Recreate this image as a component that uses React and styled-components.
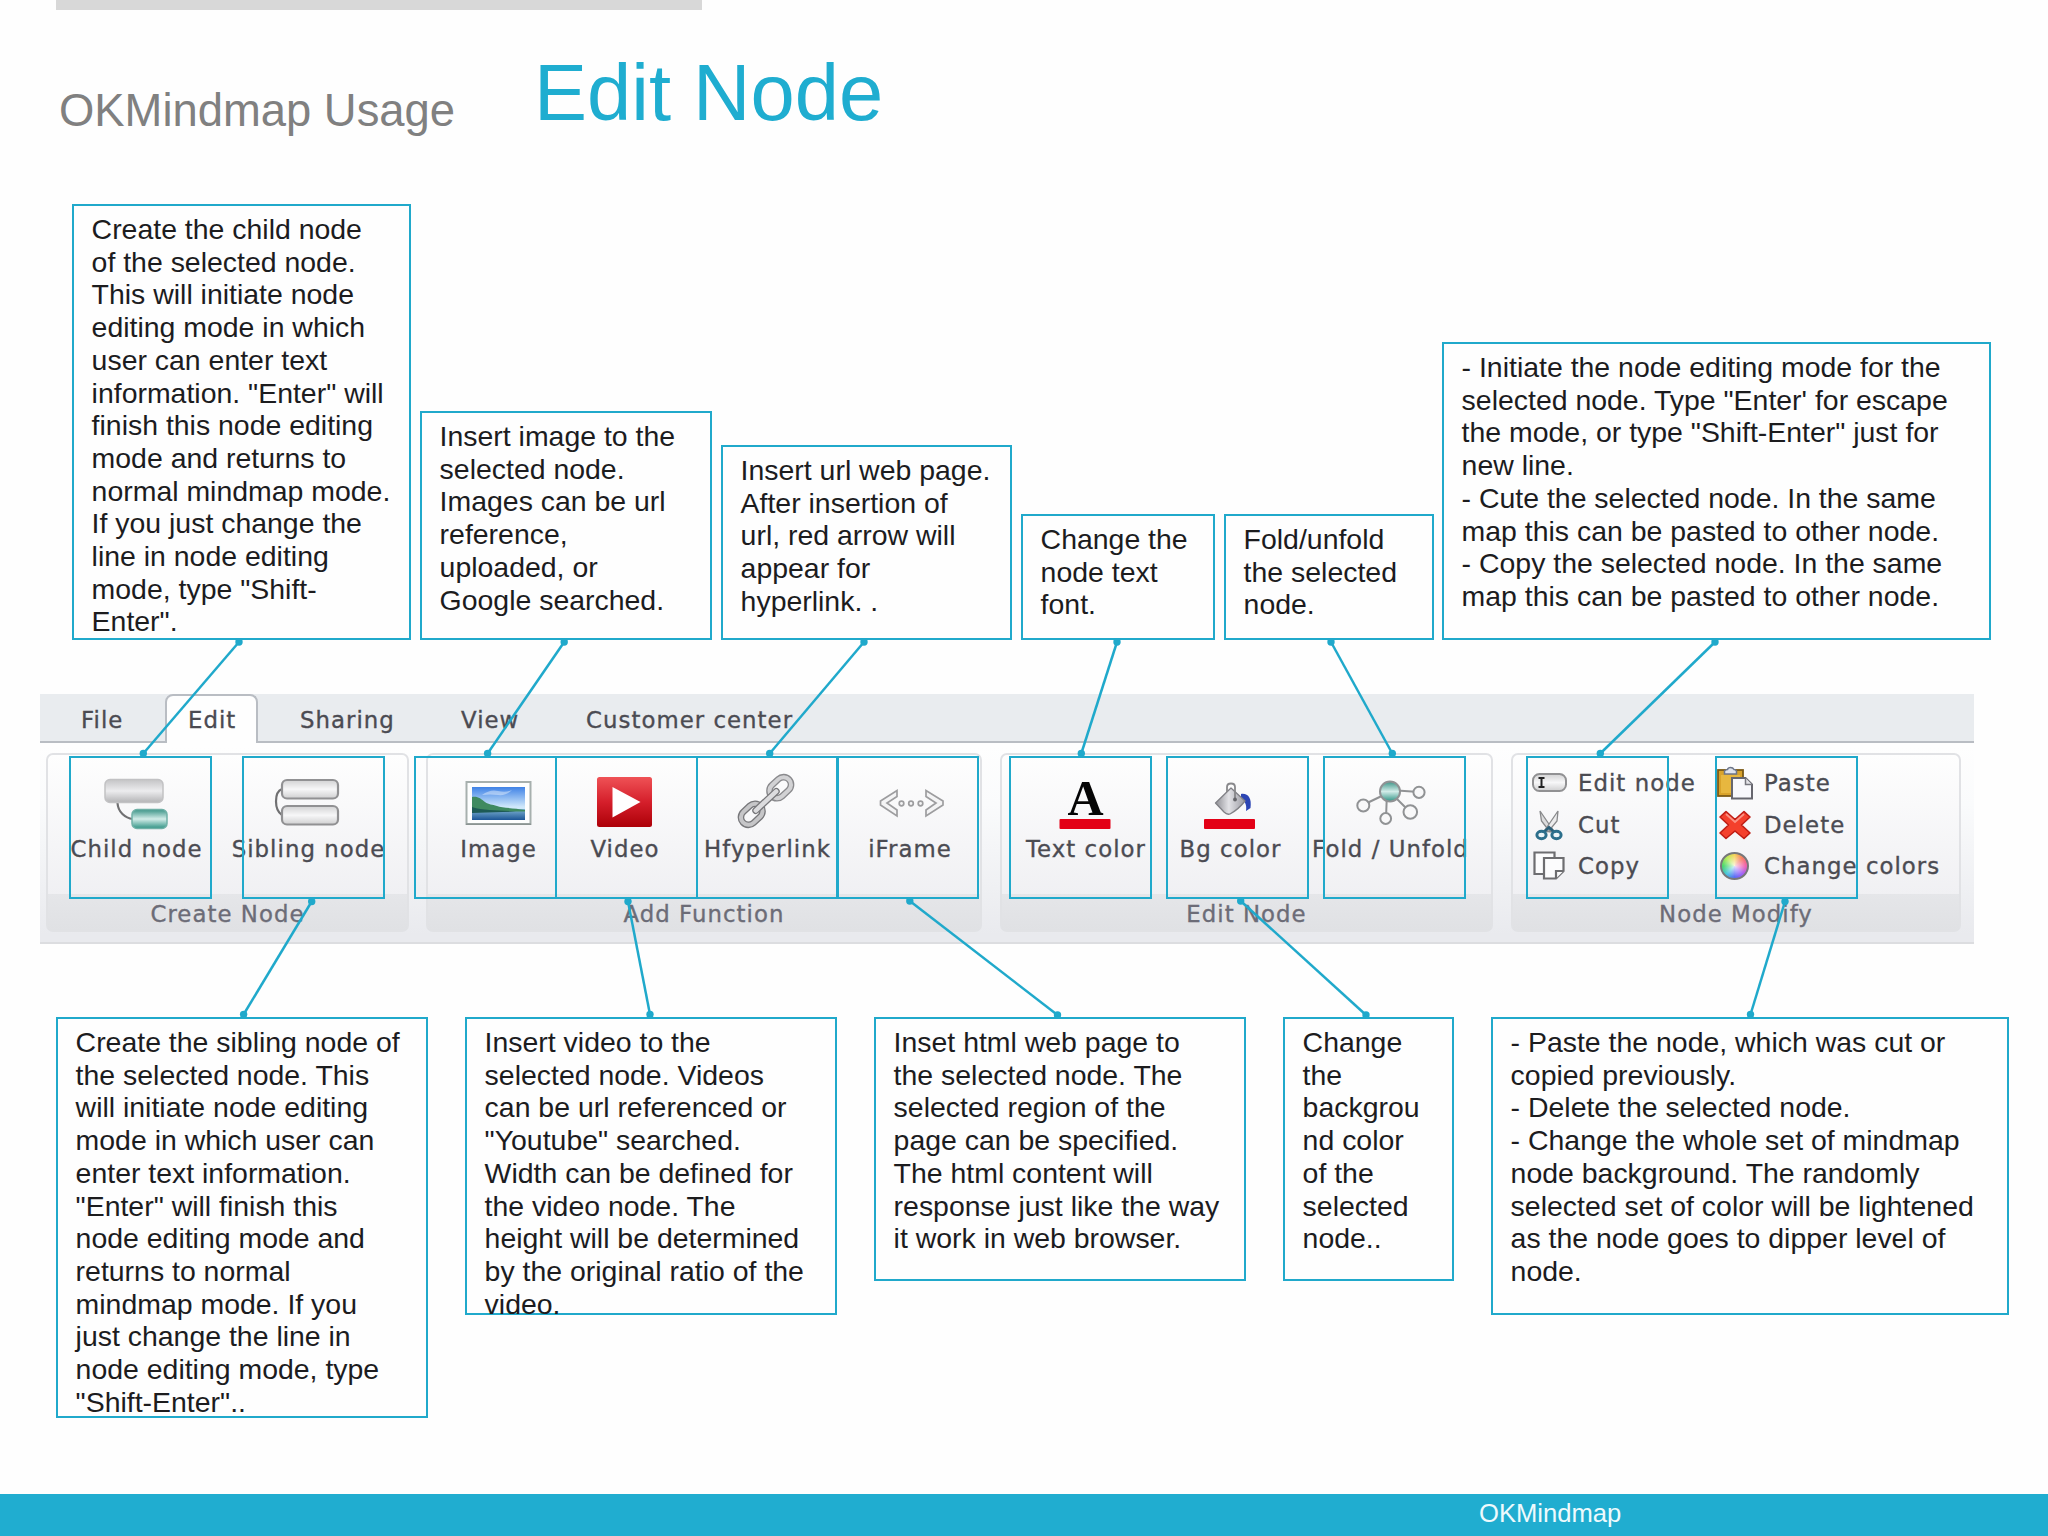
import React from 'react'
import styled, { createGlobalStyle } from 'styled-components'

const topNotes = [
    { width: 339, height: 436, gap: 9, text: 'Create the child node\nof the selected node.\nThis will initiate node\nediting mode in which\nuser can enter text\ninformation. "Enter" will\nfinish this node editing\nmode and returns to\nnormal mindmap mode.\nIf you just change the\nline in node editing\nmode, type "Shift-\nEnter".' },
    { width: 292, height: 229, gap: 9, text: 'Insert image to the\nselected node.\nImages can be url\nreference,\nuploaded, or\nGoogle searched.' },
    { width: 291, height: 195, gap: 9, text: 'Insert url web page.\nAfter insertion of\nurl, red arrow will\nappear for\nhyperlink. .' },
    { width: 194, height: 126, gap: 9, text: 'Change the\nnode text\nfont.' },
    { width: 210, height: 126, gap: 8, text: 'Fold/unfold\nthe selected\nnode.' },
    { width: 549, height: 298, gap: 0, text: '- Initiate the node editing mode for the\nselected node. Type "Enter\' for escape\nthe mode, or type "Shift-Enter" just for\nnew line.\n- Cute the selected node. In the same\nmap this can be pasted to other node.\n- Copy the selected node. In the same\nmap this can be pasted to other node.' },
]

const bottomNotes = [
    { width: 372, height: 401, gap: 37, text: 'Create the sibling node of\nthe selected node. This\nwill initiate node editing\nmode in which user can\nenter text information.\n"Enter" will finish this\nnode editing mode and\nreturns to normal\nmindmap mode. If you\njust change the line in\nnode editing mode, type\n"Shift-Enter"..' },
    { width: 372, height: 298, gap: 37, text: 'Insert video to the\nselected node. Videos\ncan be url referenced or\n"Youtube" searched.\nWidth can be defined for\nthe video node. The\nheight will be determined\nby the original ratio of the\nvideo.' },
    { width: 372, height: 264, gap: 37, text: 'Inset html web page to\nthe selected node. The\nselected region of the\npage can be specified.\nThe html content will\nresponse just like the way\nit work in web browser.' },
    { width: 171, height: 264, gap: 37, text: 'Change\nthe\nbackgrou\nnd color\nof the\nselected\nnode..' },
    { width: 518, height: 298, gap: 0, text: '- Paste the node, which was cut or\ncopied previously.\n- Delete the selected node.\n- Change the whole set of mindmap\nnode background. The randomly\nselected set of color will be lightened\nas the node goes to dipper level of\nnode.' },
]

// left edges of the frames drawn over the ribbon
const frames = [69, 242, 414, 555, 696, 836, 1009, 1166, 1323, 1526, 1715]

const connectors = [
    [239, 642, 143.3, 753.5],
    [564.2, 642, 487.6, 753.5],
    [864, 642, 769.7, 753.5],
    [1117, 642, 1081.3, 753.5],
    [1331, 642, 1392.3, 753.5],
    [1715, 642, 1600.3, 753.5],
    [311.7, 901.5, 243.6, 1014.5],
    [628, 901.5, 650, 1014.5],
    [909.8, 901, 1057.5, 1015],
    [1240.7, 901, 1366, 1015],
    [1785, 901.5, 1750.5, 1014.5],
]

const ChildIcon = () => (
    <ToolSvg viewBox="0 0 72 54">
        <defs>
            <linearGradient id="silver" x2="0" y2="1">
                <stop offset="0" stopColor="#c4c4c6" />
                <stop offset=".5" stopColor="#ececee" />
                <stop offset="1" stopColor="#b4b4b6" />
            </linearGradient>
            <linearGradient id="teal" x2="0" y2="1">
                <stop offset="0" stopColor="#3b9487" />
                <stop offset=".5" stopColor="#d2ece8" />
                <stop offset="1" stopColor="#2f9384" />
            </linearGradient>
        </defs>
        <path d="M17.5 27C18 36 25 42 33 43" fill="none" stroke="#707072" strokeWidth="2.2" />
        <rect x="5" y="3.5" width="58" height="23" rx="5" fill="url(#silver)" stroke="#c2c2c4" strokeWidth="1.5" />
        <rect x="32" y="33.5" width="35" height="19" rx="5" fill="url(#teal)" stroke="#6fb0a6" strokeWidth="1.5" />
    </ToolSvg>
)

const SiblingIcon = () => (
    <ToolSvg viewBox="0 0 72 54">
        <defs>
            <linearGradient id="pale" x2="0" y2="1">
                <stop offset="0" stopColor="#d2d2d3" />
                <stop offset=".5" stopColor="#f7f7f8" />
                <stop offset="1" stopColor="#cfcfd0" />
            </linearGradient>
        </defs>
        <path d="M10 13C2 16 2 34 10 39" fill="none" stroke="#707072" strokeWidth="2.2" />
        <rect x="10" y="4" width="56" height="18.5" rx="5" fill="url(#pale)" stroke="#919193" strokeWidth="2.2" />
        <rect x="10" y="30" width="56" height="18.5" rx="5" fill="url(#pale)" stroke="#919193" strokeWidth="2.2" />
    </ToolSvg>
)

const ImageIcon = () => (
    <ToolSvg viewBox="0 0 72 54">
        <defs>
            <linearGradient id="sky" x2="0" y2="1">
                <stop offset="0" stopColor="#3f82e6" />
                <stop offset=".6" stopColor="#cfe8fb" />
            </linearGradient>
            <linearGradient id="lake" x2="0" y2="1">
                <stop offset="0" stopColor="#7fb4d3" />
                <stop offset="1" stopColor="#1c5596" />
            </linearGradient>
        </defs>
        <rect x="4.5" y="6" width="64" height="42" fill="#fdfefe" stroke="#a7b0ae" strokeWidth="2" />
        <path d="M4 48.3H69" stroke="#8b9492" strokeWidth="1.5" />
        <rect x="10" y="11" width="53" height="33" fill="url(#sky)" />
        <path d="M20 19q8-6 16-4t14-1q-6 6-14 5t-16 0z" fill="#fff" opacity=".4" />
        <rect x="10" y="33" width="53" height="11" fill="url(#lake)" />
        <path d="M10 21c6-1 9 2 13 5s7 2 12 4 18 2 28 4v1.5H10z" fill="#3f8a60" />
        <path d="M10 31c12 4 28 3 44 4.5L10 37z" fill="#1d5a55" />
    </ToolSvg>
)

const VideoIcon = () => (
    <ToolSvg viewBox="0 0 72 54">
        <defs>
            <linearGradient id="red" x2="0" y2="1">
                <stop offset="0" stopColor="#ef5256" />
                <stop offset=".5" stopColor="#d51f2b" />
                <stop offset="1" stopColor="#ad0008" />
            </linearGradient>
        </defs>
        <rect x="8" y="1" width="55" height="50" rx="2.5" fill="url(#red)" />
        <path d="M23.5 11L51.5 26L23.5 41.5Z" fill="#fff" />
    </ToolSvg>
)

// two rings joined by a bar, drawn flat and turned by 48 degrees
const LinkIcon = () => (
    <ToolSvg viewBox="0 0 72 54">
        <g fill="none" transform="rotate(-43 35 25)">
            <rect x="3.5" y="17.5" width="24" height="15" rx="7.5" stroke="#77777a" strokeWidth="6.6" />
            <rect x="3.5" y="17.5" width="24" height="15" rx="7.5" stroke="#c6c6c8" strokeWidth="4" />
            <rect x="42.500" y="17.5" width="24" height="15" rx="7.5" stroke="#8a8a8d" strokeWidth="6.6" />
            <rect x="42.500" y="17.5" width="24" height="15" rx="7.5" stroke="#d2d2d4" strokeWidth="4" />
            <path d="M21 25H49" stroke="#77777a" strokeWidth="7" strokeLinecap="round" />
            <path d="M21 25H49" stroke="#dcdcde" strokeWidth="4.400" strokeLinecap="round" />
        </g>
    </ToolSvg>
)

const FrameIcon = () => (
    <ToolSvg viewBox="0 0 72 54">
        <g fill="#f4f4f5" stroke="#9d9d9f" strokeWidth="1.7">
            <path d="M23 14.5V20.5L13 27L23 34V40L6.5 29V25Z" />
            <path d="M52 14.5V20.5L62 27L52 34V40L69 29V25Z" />
            <circle cx="27.5" cy="27.5" r="2.3" />
            <circle cx="37" cy="27.5" r="2.3" />
            <circle cx="46.5" cy="27.5" r="2.3" />
        </g>
    </ToolSvg>
)

const TextColorIcon = () => (
    <ToolSvg viewBox="0 0 72 54">
        <Letter x="35.5" y="38.5" textAnchor="middle">A</Letter>
        <rect x="9.5" y="43" width="51" height="10" rx="1" fill="#e30016" />
    </ToolSvg>
)

const BucketIcon = () => (
    <ToolSvg viewBox="0 0 72 54">
        <defs>
            <linearGradient id="metal">
                <stop offset="0" stopColor="#8e8e94" />
                <stop offset=".45" stopColor="#e2e2e6" />
                <stop offset="1" stopColor="#9a9aa2" />
            </linearGradient>
        </defs>
        <path d="M47 18C54 17 58 22 56.5 32L52 35C53 29 51 25 47 22Z" fill="#2c45b4" />
        <path d="M37 12L51 25Q45 33 36 38Q33 39 30 36L21.5 27Z" fill="url(#metal)" stroke="#808086" strokeWidth="1.3" strokeLinejoin="round" />
        <path d="M33 16V11Q33 7.500 37 7.500T41 11V23" fill="none" stroke="#88888b" strokeWidth="1.8" />
        <circle cx="41" cy="23.5" r="1.9" fill="#66666b" />
        <rect x="10" y="43" width="51" height="10" rx="1" fill="#e30016" />
    </ToolSvg>
)

const FoldIcon = () => (
    <ToolSvg viewBox="0 0 72 54">
        <g fill="#f8f8f9" stroke="#909294" strokeWidth="2">
            <path d="M36 16L9 29M33 16L32 42M36 16L56 36M36 14L65 16" />
            <circle cx="36" cy="15.5" r="10" fill="url(#teal)" />
            <circle cx="9.3" cy="29.5" r="6" />
            <circle cx="31.7" cy="42.5" r="5.4" />
            <circle cx="56.3" cy="36" r="6.8" />
            <circle cx="65" cy="16.3" r="5.6" />
        </g>
    </ToolSvg>
)

const EditIcon = () => (
    <ActionSvg viewBox="0 0 38 34">
        <rect x="2" y="8" width="33" height="17" rx="6.5" fill="url(#pale)" stroke="#919193" strokeWidth="2" />
        <path d="M7.5 12H13.5M10.5 12V21M7.5 21H13.5" stroke="#222" strokeWidth="2" />
    </ActionSvg>
)

const CutIcon = () => (
    <ActionSvg viewBox="0 0 38 34">
        <path d="M9 3L22 22L19 24L10.5 13Z" fill="#dcdcdd" stroke="#88898b" strokeWidth="1.3" />
        <path d="M27 3L14 22L17 24L26 13Z" fill="#ececed" stroke="#88898b" strokeWidth="1.3" />
        <path d="M13.5 23.5L18 19.500L22.5 23.5" fill="none" stroke="#2b5f78" strokeWidth="3" />
        <ellipse cx="10.5" cy="27" rx="4.6" ry="3.700" fill="#eef5f8" stroke="#2c6f8c" strokeWidth="3" />
        <ellipse cx="25.5" cy="27" rx="4.6" ry="3.700" fill="#eef5f8" stroke="#2c6f8c" strokeWidth="3" />
    </ActionSvg>
)

const CopyIcon = () => (
    <ActionSvg viewBox="0 0 38 34">
        <g fill="#fcfcfd" stroke="#6d6d70" strokeWidth="2.2">
            <path d="M3.5 3.5H23.5V25H3.5Z" />
            <path d="M13 9H32.5V22L25 29.5H13Z" />
            <path d="M32.5 22H25V29.5" />
        </g>
    </ActionSvg>
)

const PasteIcon = () => (
    <ActionSvg viewBox="0 0 38 34">
        <rect x="1" y="4" width="25" height="26" fill="#d9a32b" stroke="#7c5a16" strokeWidth="1.8" />
        <rect x="4" y="9" width="19" height="18" fill="#e7b73f" />
        <path d="M7.5 8V5Q9 3.5 10.5 3.5Q11 1.5 13.500 1.5T17 3.5Q18.5 3.5 19.5 5V8Z" fill="#dfe3ec" stroke="#6d7689" strokeWidth="1.5" />
        <path d="M15 12H28.5L35 18.5V32.5H15Z" fill="#f8f8fc" stroke="#66666e" strokeWidth="2" />
        <path d="M28.5 12V18.5H35" fill="#e4e4ea" stroke="#77777f" strokeWidth="1.5" />
    </ActionSvg>
)

const DeleteIcon = () => (
    <ActionSvg viewBox="0 0 38 34">
        <path d="M9 3.500L18 11.500L27 3.500L33 9L24.5 17L33 25L27 30.500L18 23L9 30.500L3 25L11.5 17L3 9Z" fill="#f4402c" stroke="#bf1d14" strokeWidth="1.6" strokeLinejoin="round" />
        <path d="M9 6L18 14L27 6" fill="none" stroke="#fb9284" strokeWidth="1.8" />
    </ActionSvg>
)

const tabs = [
    { name: 'File', width: 125, pad: 41 },
    { name: 'Edit', width: 93, pad: 21, active: true },
    { name: 'Sharing', width: 160, pad: 42 },
    { name: 'View', width: 125, pad: 43 },
    { name: 'Customer center', width: 260, pad: 43 },
]

const groups = [
    {
        title: 'Create Node', width: 363, gap: 17,
        tools: [
            { label: 'Child node', width: 176, icon: <ChildIcon /> },
            { label: 'Sibling node', width: 168, icon: <SiblingIcon /> },
        ],
    },
    {
        title: 'Add Function', width: 556, gap: 18,
        tools: [
            { label: 'Image', width: 140, icon: <ImageIcon /> },
            { label: 'Video', width: 113, icon: <VideoIcon /> },
            { label: 'Hfyperlink', width: 172, icon: <LinkIcon /> },
            { label: 'iFrame', width: 113, icon: <FrameIcon /> },
        ],
    },
    {
        title: 'Edit Node', width: 493, gap: 18,
        tools: [
            { label: 'Text color', width: 167, icon: <TextColorIcon /> },
            { label: 'Bg color', width: 122, icon: <BucketIcon /> },
            { label: 'Fold / Unfold', width: 198, icon: <FoldIcon /> },
        ],
    },
]

const actions = [
    { label: 'Edit node', icon: <EditIcon /> },
    { label: 'Paste', icon: <PasteIcon /> },
    { label: 'Cut', icon: <CutIcon /> },
    { label: 'Delete', icon: <DeleteIcon /> },
    { label: 'Copy', icon: <CopyIcon /> },
    { label: 'Change colors', icon: <ColorWheel /> },
]

function ColorWheel() {
    return (
        <WheelSlot>
            <Wheel />
        </WheelSlot>
    )
}

function Ribbon() {
    return (
        <RibbonBox>
            <TabBar>
                {tabs.map((tab) => (
                    <Tab key={tab.name} $width={tab.width} $pad={tab.pad} $active={tab.active}>{tab.name}</Tab>
                ))}
            </TabBar>
            <Groups>
                {groups.map((group) => (
                    <Group key={group.title} $width={group.width} $gap={group.gap}>
                        <Tools>
                            {group.tools.map((tool) => (
                                <Tool key={tool.label} $width={tool.width}>
                                    {tool.icon}
                                    <ToolLabel>{tool.label}</ToolLabel>
                                </Tool>
                            ))}
                        </Tools>
                        <GroupTitle>{group.title}</GroupTitle>
                    </Group>
                ))}
                <Group $width={450} $gap={0}>
                    <Actions>
                        {actions.map((action) => (
                            <Action key={action.label}>
                                {action.icon}
                                {action.label}
                            </Action>
                        ))}
                    </Actions>
                    <GroupTitle>Node Modify</GroupTitle>
                </Group>
            </Groups>
        </RibbonBox>
    )
}

function Notes({ items }) {
    return items.map((note) => (
        <Note key={note.text} $width={note.width} $height={note.height} $gap={note.gap}>{note.text}</Note>
    ))
}

function App() {
    return (
        <Slide>
            <GlobalStyle />
            <TopStripe />
            <Header>
                <Subject>OKMindmap Usage</Subject>
                <Title>Edit Node</Title>
            </Header>
            <TopRow>
                <Notes items={topNotes} />
            </TopRow>
            <Ribbon />
            <BottomRow>
                <Notes items={bottomNotes} />
            </BottomRow>
            <Footer>OKMindmap</Footer>
            {frames.map((left) => (
                <Frame key={left} $left={left} />
            ))}
            <Connectors viewBox="0 0 2048 1536">
                {connectors.map(([x1, y1, x2, y2]) => (
                    <g key={x1}>
                        <line x1={x1} y1={y1} x2={x2} y2={y2} stroke="#20a9cb" strokeWidth="2.5" />
                        <circle cx={x1} cy={y1} r="3.7" fill="#20a9cb" />
                        <circle cx={x2} cy={y2} r="3.7" fill="#20a9cb" />
                    </g>
                ))}
            </Connectors>
        </Slide>
    )
}

export default App

const GlobalStyle = createGlobalStyle`
    * {
        box-sizing: border-box;
    }
    body {
        margin: 0;
        background: #fefefe;
    }
`
const Slide = styled.div`
    position: relative;
    width: 2048px;
    height: 1536px;
    display: flex;
    flex-direction: column;
    overflow: hidden;
    background: #fefefe;
    font-family: 'Liberation Sans', Arial, sans-serif;
`
const TopStripe = styled.div`
    width: 646px;
    height: 10px;
    margin-left: 56px;
    background: #d8d8d8;
`
const Header = styled.header`
    height: 194px;
    padding-left: 59px;
    display: flex;
    align-items: flex-start;
`
const Subject = styled.div`
    width: 475px;
    padding-top: 76px;
    font-size: 45.4px;
    line-height: 50px;
    color: #808080;
`
const Title = styled.h1`
    margin: 0;
    padding-top: 38px;
    font-size: 79.5px;
    line-height: 90px;
    font-weight: 400;
    color: #1fadd0;
`
const TopRow = styled.section`
    height: 436px;
    padding-left: 72px;
    display: flex;
    align-items: flex-end;
`
const BottomRow = styled.section`
    height: 550px;
    padding: 73px 0 0 56px;
    display: flex;
    align-items: flex-start;
`
const Note = styled.div`
    flex: none;
    width: ${(p) => p.$width}px;
    height: ${(p) => p.$height}px;
    margin-right: ${(p) => p.$gap}px;
    padding: 7px 0 0 17.6px;
    border: 2px solid #20a9cb;
    font-size: 28.44px;
    line-height: 32.7px;
    white-space: pre;
    color: #1c1c1e;
`
const RibbonBox = styled.section`
    width: 1934px;
    height: 250px;
    margin: 54px 0 0 40px;
    border-bottom: 2px solid #dcdde0;
    background: linear-gradient(#fefefe 52px, #fafbfc 110px, #e9eaee 240px);
    font-family: 'DejaVu Sans', Verdana, sans-serif;
    font-size: 22.8px;
    letter-spacing: 1.05px;
    -webkit-text-stroke: 0.35px;
    color: #4b4b52;
`
const TabBar = styled.nav`
    height: 49px;
    display: flex;
    border-bottom: 2px solid #b9bdc3;
    background: #e9ecef;
`
const Tab = styled.div`
    width: ${(p) => p.$width}px;
    height: 49px;
    padding-left: ${(p) => p.$pad}px;
    line-height: 52px;
    white-space: nowrap;
    ${(p) => p.$active && `
        border: 2px solid #b9bdc3;
        border-bottom: none;
        border-radius: 8px 8px 0 0;
        background: #fefefe;
        line-height: 48px;
    `}
`
const Groups = styled.div`
    padding: 10px 0 0 6px;
    display: flex;
`
const Group = styled.div`
    flex: none;
    width: ${(p) => p.$width}px;
    height: 179px;
    margin-right: ${(p) => p.$gap}px;
    display: flex;
    flex-direction: column;
    border: 2px solid #e1e2e5;
    border-radius: 7px;
    background: linear-gradient(#fefefe, #f0f0f3 140px);
`
const Tools = styled.div`
    height: 139px;
    display: flex;
`
const Tool = styled.div`
    flex: none;
    width: ${(p) => p.$width}px;
    padding-top: 21px;
    display: flex;
    flex-direction: column;
    align-items: center;
`
const ToolSvg = styled.svg`
    width: 72px;
    height: 54px;
    overflow: visible;
`
const Letter = styled.text`
    font-family: 'Liberation Serif', 'Times New Roman', serif;
    font-size: 50px;
    font-weight: 700;
    letter-spacing: 0;
    fill: #050505;
`
const ToolLabel = styled.span`
    margin: 6px 0 0 1px;
    line-height: 26px;
    white-space: nowrap;
`
const GroupTitle = styled.div`
    height: 36px;
    padding-top: 4px;
    text-align: center;
    line-height: 32px;
    color: #6c6c77;
    background: linear-gradient(#e5e6e9, #e0e1e4);
`
const Actions = styled.div`
    height: 139px;
    padding: 7px 0 0 18px;
    display: grid;
    grid-template-columns: 186px 1fr;
    grid-auto-rows: 41.7px;
    align-content: start;
`
const Action = styled.div`
    display: flex;
    align-items: center;
    gap: 9px;
    white-space: nowrap;
`
const ActionSvg = styled.svg`
    flex: none;
    width: 38px;
    height: 34px;
`
const WheelSlot = styled.div`
    width: 38px;
    padding-left: 3px;
`
const Wheel = styled.div`
    width: 29px;
    height: 28px;
    border: 2px solid #77777a;
    border-radius: 50%;
    background: radial-gradient(#ffffffcc, #ffffff00 65%), conic-gradient(#f6d45a, #f77a62, #f060b0, #a060f8, #5a6cf5, #45c6dd, #48d86c, #b6ec58, #f6d45a);
`
const Frame = styled.div`
    position: absolute;
    left: ${(p) => p.$left}px;
    top: 756px;
    width: 143px;
    height: 143px;
    border: 2px solid #20a9cb;
`
const Connectors = styled.svg`
    position: absolute;
    left: 0;
    top: 0;
    width: 2048px;
    height: 1536px;
`
const Footer = styled.footer`
    height: 42px;
    padding-left: 1479px;
    background: #20add0;
    color: #eefafd;
    font-size: 25.6px;
    line-height: 38px;
`
